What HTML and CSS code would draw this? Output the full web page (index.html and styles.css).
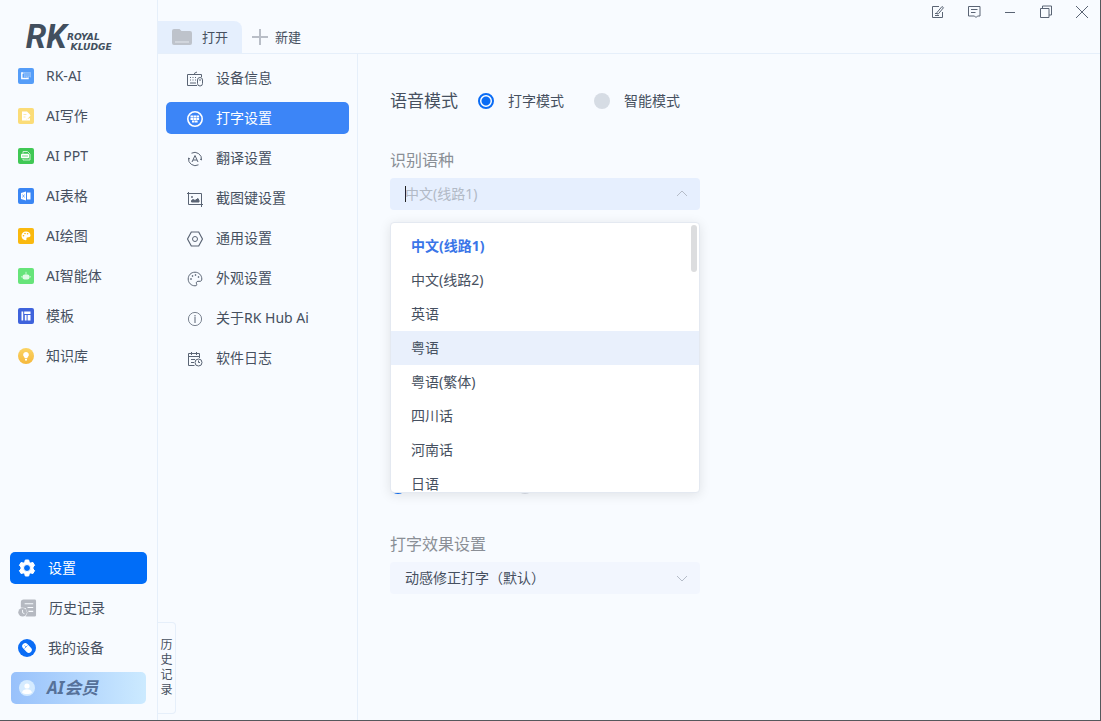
FILE: index.html
```
<!DOCTYPE html>
<html lang="zh-CN">
<head>
  <meta charset="UTF-8">
  <meta name="viewport" content="width=device-width, initial-scale=1.0">
  <title>RK Hub Ai</title>
  <link rel="stylesheet" href="styles.css">
</head>
<body>

  <aside class="sidebar">
    <svg class="logo" width="112" height="48" viewBox="0 0 112 48" role="img" aria-label="Royal Kludge">
      <text class="logoMark" x="12" y="39">RK</text>
      <text class="logoName" x="57" y="30">ROYAL</text>
      <text class="logoName" x="61" y="41">KLUDGE</text>
    </svg>

    <nav class="appNav">
      <a href="#">
        <svg width="16" height="16" viewBox="0 0 16 16"><rect width="16" height="16" rx="2" fill="#559df8"/><path d="M5.500 5H3.800v5.500H10V9.500" fill="none" stroke="#fff" stroke-width="1.400"/><path d="M6.500 4.500h6v4.500h-6z" fill="#7db5fa" stroke="#a9cdfc" stroke-dasharray="1 1"/></svg>
        RK-AI
      </a>
      <a href="#">
        <svg width="16" height="16" viewBox="0 0 16 16"><rect width="16" height="16" rx="2" fill="#fbdc78"/><path d="M4 3.500h5l3 3-4 5 4-1.500v2.500H4z" fill="#fff"/><path d="M5.500 6.500h3M5.500 9h2" stroke="#fbe9ab"/><path d="M8.500 11l3.500-4" stroke="#fff" stroke-width="1.500"/></svg>
        AI写作
      </a>
      <a href="#">
        <svg width="16" height="16" viewBox="0 0 16 16"><rect width="16" height="16" rx="2" fill="#40c855"/><path d="M5 5.500V3.500h4.500L12 6v6H5v-1" fill="none" stroke="#c9f0cf"/><rect x="3" y="5.800" width="8" height="4.400" rx="1" fill="#fff"/><path d="M5 7v2M7 7v2M9 7v2" stroke="#40c855" stroke-width=".7"/></svg>
        AI PPT
      </a>
      <a href="#">
        <svg width="16" height="16" viewBox="0 0 16 16"><rect width="16" height="16" rx="2" fill="#3b86f4"/><path d="M3 5l5-1.500v9L3 11z" fill="#fff"/><path d="M9 4.500h3.500v7H9z" fill="#fff"/><path d="M4.500 6.500l2 3m0-3l-2 3" stroke="#3b86f4" stroke-width=".6"/></svg>
        AI表格
      </a>
      <a href="#">
        <svg width="16" height="16" viewBox="0 0 16 16"><rect width="16" height="16" rx="2" fill="#fab90f"/><path d="M8 3.500c-2.700 0-4.500 1.900-4.500 4.300 0 2.500 1.800 4.400 4.100 4.400 1.500 0 .5-1.500 1-2.300.6-1 3.900.3 3.900-2.300C12.500 5 10.500 3.500 8 3.500z" fill="#fff"/><g fill="#fab90f"><circle cx="5.500" cy="7.700" r=".8"/><circle cx="7" cy="5.500" r=".8"/><circle cx="9.600" cy="5.700" r=".8"/></g></svg>
        AI绘图
      </a>
      <a href="#">
        <svg width="16" height="16" viewBox="0 0 16 16"><rect width="16" height="16" rx="2" fill="#67e47a"/><rect x="4.500" y="6.500" width="7" height="5" rx="2" fill="#e0fbe5"/><path d="M8 3.800v3M3.800 8v1.500M12.200 8v1.500" stroke="#c9f7d1"/></svg>
        AI智能体
      </a>
      <a href="#">
        <svg width="16" height="16" viewBox="0 0 16 16"><rect width="16" height="16" rx="2" fill="#3f63dc"/><path d="M3.500 3.500h1.700v9H3.500zM6.200 3.500h6.300v2.500H6.200zM6.800 7h1.800v5.500H6.800zM9.600 7h2.900v5.500H9.600z" fill="#fff"/></svg>
        模板
      </a>
      <a href="#">
        <svg width="16" height="16" viewBox="0 0 16 16"><defs><linearGradient id="bulb" x1="0" y1="0" x2="0" y2="1"><stop offset="0" stop-color="#fbd465"/><stop offset="1" stop-color="#f5b83c"/></linearGradient></defs><circle cx="8" cy="8" r="8" fill="url(#bulb)"/><path d="M8 4a2.800 2.800 0 0 0-1.800 5l.6 1.300h2.400l.6-1.300A2.800 2.800 0 0 0 8 4zM7 11h2v1.600H7z" fill="#fff"/></svg>
        知识库
      </a>
    </nav>

    <nav class="userNav">
      <a class="active" href="#">
        <svg width="18" height="18" viewBox="0 0 18 18"><path fill="#fff" stroke="#fff" stroke-linejoin="round" fill-rule="evenodd" d="M7.300 1h3.400l.5 2.200 1.500.9 2.200-.7 1.700 3L15 8v2l1.600 1.600-1.700 3-2.200-.7-1.500.9-.5 2.200H7.300l-.5-2.200-1.500-.9-2.200.7-1.700-3L3 10V8L1.400 6.400l1.700-3 2.200.7 1.500-.9zM9 5.500a3.500 3.500 0 1 0 0 7 3.500 3.500 0 0 0 0-7z"/></svg>
        设置
      </a>
      <a href="#">
        <svg width="19" height="20" viewBox="0 0 20 20"><path d="M6 1h11.500A1.500 1.500 0 0 1 19 2.500v15a1.500 1.500 0 0 1-1.500 1.500H8l2-4-2-5-5-.5V4a3 3 0 0 1 3-3z" fill="#b5b9c1"/><path d="M7 5.500h9M10 9.500h6M11 13.500h5" stroke="#f8fbff" stroke-width="1.200"/><circle cx="4.800" cy="14.500" r="4.500" fill="#b5b9c1"/><path d="M4.800 12v3l2 1" fill="none" stroke="#f8fbff"/></svg>
        历史记录
      </a>
      <a href="#">
        <svg width="18" height="18" viewBox="0 0 18 18"><circle cx="9" cy="9" r="9" fill="#0a6cf5"/><rect x="6" y="3.500" width="6" height="11" rx="3" fill="#fff" transform="rotate(-45 9 9)"/><path d="M6.500 9.500l3-3M7.800 7.800L6.500 6.500" stroke="#0a6cf5" stroke-width=".6"/></svg>
        我的设备
      </a>
      <a class="vip" href="#">
        <svg width="16" height="16" viewBox="0 0 16 16"><circle cx="8" cy="8" r="8" fill="#d5ebff"/><circle cx="8" cy="6" r="2.600" fill="#fff"/><path d="M3 12.500c.5-4.500 9.500-4.500 10 0-2 2-8 2-10 0z" fill="#fff"/></svg>
        AI会员
      </a>
    </nav>
  </aside>

  <div class="workspace">
    <header class="topbar">
      <button class="tab open" type="button">
        <svg width="20" height="16" viewBox="0 0 20 16"><path d="M2 0h5.500l2 2H18a2 2 0 0 1 2 2v10a2 2 0 0 1-2 2H2a2 2 0 0 1-2-2V2a2 2 0 0 1 2-2z" fill="#bec3cb"/><path d="M3 13h14" stroke="#e4e8ee"/></svg>
        打开
      </button>
      <button class="tab" type="button">
        <svg width="16" height="16" viewBox="0 0 16 16"><path d="M8 0v16M0 8h16" stroke="#b9bec7" stroke-width="2"/></svg>
        新建
      </button>
      <div class="windowControls">
        <button type="button" aria-label="编辑"><svg width="14" height="14" viewBox="0 0 14 14"><path d="M8 1.500H1.500v11h10V7M4 8.500h2M4 10.500h4M6 7.500l5-6 1.500 1.200-5 6L6 9z"/></svg></button>
        <button type="button" aria-label="反馈"><svg width="14" height="14" viewBox="0 0 14 14"><path d="M1.500 1.500h11.500v9.500H10.500L9 12.500 7.500 11h-6zM4 4.500h6.500M4 7.500h4.500"/></svg></button>
        <button type="button" aria-label="最小化"><svg width="14" height="14" viewBox="0 0 14 14"><path d="M2 7.500h10"/></svg></button>
        <button type="button" aria-label="还原"><svg width="14" height="14" viewBox="0 0 14 14"><path d="M1.500 3.500h8.500v9H1.500zM3.500 3.500v-2.500h9v9h-2.500"/></svg></button>
        <button type="button" aria-label="关闭"><svg width="14" height="14" viewBox="0 0 14 14"><path d="M1 1l12 12M13 1L1 13"/></svg></button>
      </div>
    </header>

    <div class="page">
      <div class="settingsSide">
        <nav class="settingsNav">
          <a href="#">
            <svg width="16" height="16" viewBox="0 0 16 16"><path d="M10 14.500H.5v-11h14V6M7.500 3.500V2.200L10 1M3 6.500h1M5.500 6.500h1M8 6.500h1M3 9h1M5.500 9h1M8 9h1M3 12h6"/><rect x="10.500" y="6.500" width="5" height="8.500" rx="2.500"/><path d="M13 8v2"/></svg>
            设备信息
          </a>
          <a class="active" href="#">
            <svg width="16" height="16" viewBox="0 0 16 16"><circle cx="8" cy="8" r="7.200" stroke-width="1.600"/><path d="M3.500 5.500h9M3.500 8h9M5 10.500h6" stroke-width="1.800" stroke-dasharray="2.600 .4"/></svg>
            打字设置
          </a>
          <a href="#">
            <svg width="16" height="16" viewBox="0 0 16 16"><path d="M4.500 2.200a6.800 6.800 0 0 1 10 6.800l-1.500-1M11.500 13.800a6.800 6.800 0 0 1-10-6.800l1.500 1M5 11L8 4.500l3 6.500M6 9h4"/></svg>
            翻译设置
          </a>
          <a href="#">
            <svg width="16" height="16" viewBox="0 0 16 16"><path d="M0 2.500h14.500V16M1.500 1v12.500H16"/><circle cx="5" cy="6" r=".6"/><path d="M4.500 11V9.500L6 8.500l2 1L11 7.500l1 2V11z" fill="#5a6474"/></svg>
            截图键设置
          </a>
          <a href="#">
            <svg width="16" height="16" viewBox="0 0 16 16"><path d="M4.300 1h7.400L15.500 8l-3.800 7H4.300L.5 8z" stroke-width="1.200"/><circle cx="8" cy="8" r="2.500"/></svg>
            通用设置
          </a>
          <a href="#">
            <svg width="16" height="16" viewBox="0 0 16 16"><path d="M8 1.200C4 1.200 1.200 4.200 1.200 8s3 6.800 6.800 6.800c2 0 2-1 1.500-2-.5-1.200 0-2.500 1.500-2.500h2c1.200 0 1.800-.8 1.800-2.300 0-3.800-3-6.800-6.800-6.800z"/><circle cx="4" cy="8" r=".5"/><circle cx="5.500" cy="5" r=".5"/><circle cx="8.500" cy="4" r=".5"/><circle cx="11.500" cy="6" r=".5"/></svg>
            外观设置
          </a>
          <a href="#">
            <svg width="16" height="16" viewBox="0 0 16 16"><circle cx="8" cy="8" r="6.600" stroke-width=".8"/><path d="M8 4v1M8 5.500v6.500"/></svg>
            关于RK Hub Ai
          </a>
          <a href="#">
            <svg width="16" height="16" viewBox="0 0 16 16"><path d="M7.500 14.500h-6v-12h11V7M4.500 1v3M9.500 1v3M1.500 5.500h11M4 8.500h4M4 11.500h3"/><circle cx="11.500" cy="11.500" r="3.500"/><path d="M11.500 9.500v2H13"/></svg>
            软件日志
          </a>
        </nav>
        <button class="historyTab" type="button">历史记录</button>
      </div>

      <main class="content">
        <div class="modeRow" role="radiogroup" aria-labelledby="modeLabel">
          <span class="modeLabel" id="modeLabel">语音模式</span>
          <label><input type="radio" name="mode" checked>打字模式</label>
          <label><input type="radio" name="mode">智能模式</label>
        </div>

        <div class="field">
          <label for="language">识别语种</label>
          <div class="combo">
            <div class="comboBox">
              <span class="caret"></span>
              <input type="text" id="language" placeholder="中文(线路1)" role="combobox" aria-expanded="true" aria-controls="languageList">
              <svg width="12" height="8" viewBox="0 0 12 8"><path d="M1 6l5-5 5 5"/></svg>
            </div>
            <div class="popup">
              <ul id="languageList" role="listbox">
                <li class="selected" role="option" aria-selected="true">中文(线路1)</li>
                <li role="option">中文(线路2)</li>
                <li role="option">英语</li>
                <li class="hover" role="option">粤语</li>
                <li role="option">粤语(繁体)</li>
                <li role="option">四川话</li>
                <li role="option">河南话</li>
                <li role="option">日语</li>
              </ul>
              <span class="scrollThumb"></span>
            </div>
          </div>
        </div>

        <div class="radioRow">
          <input type="radio" name="output" aria-labelledby="modeLabel" checked>
          <input type="radio" name="output" aria-labelledby="modeLabel">
        </div>

        <div class="field">
          <label for="effect">打字效果设置</label>
          <div class="selectBox">
            <select id="effect">
              <option>动感修正打字（默认）</option>
            </select>
            <svg width="12" height="8" viewBox="0 0 12 8"><path d="M1 2l5 5 5-5"/></svg>
          </div>
        </div>
      </main>
    </div>
  </div>

</body>
</html>
```

FILE: styles.css
```
* {
  box-sizing: border-box;
}

body {
  display: flex;
  min-height: 100vh;
  margin: 0;
  border-right: 1px solid #55585c;
  border-bottom: 1px solid #55585c;
  background-color: #f8fbff;
  color: #465060;
  font-family: "Noto Sans", "Noto Sans CJK SC", sans-serif;
  font-size: 14px;
  line-height: 20px;
}

a {
  color: inherit;
  text-decoration: none;
}

button,
input,
select {
  margin: 0;
  padding: 0;
  border: none;
  background: none;
  color: inherit;
  font: inherit;
}

svg {
  flex: none;
}

/* Left sidebar */
.sidebar {
  display: flex;
  flex: none;
  flex-direction: column;
  width: 158px;
  padding: 12px 10px 16px;
  border-right: 1px solid #e6effa;
}

.logo {
  height: 44px;
  overflow: visible;
  fill: #424f5e;
}

.logoMark {
  font: italic bold 36px Roboto, sans-serif;
}

.logoName {
  font: italic bold 10px "DejaVu Sans", sans-serif;
}

.appNav a {
  display: flex;
  align-items: center;
  gap: 12px;
  height: 40px;
  padding-left: 8px;
}

.userNav {
  display: flex;
  flex-direction: column;
  gap: 8px;
  margin-top: auto;
}

.userNav a {
  display: flex;
  align-items: center;
  gap: 12px;
  height: 32px;
  padding-left: 8px;
  border-radius: 5px;
}

.userNav .active {
  background-color: #006df8;
  color: #fff;
}

.userNav .vip {
  margin: 0 1px;
  background: linear-gradient(90deg, #98c1fb, #cceaff);
  color: #567199;
  font-size: 17px;
  font-style: italic;
  font-weight: bold;
}

/* Top bar */
.workspace {
  display: flex;
  flex: 1;
  flex-direction: column;
  min-width: 0;
}

.topbar {
  display: flex;
  align-items: flex-end;
  height: 54px;
  border-bottom: 1px solid #e6effa;
}

.tab {
  display: flex;
  align-items: center;
  gap: 7px;
  height: 32px;
  padding: 0 10px;
  font-size: 13px;
}

.tab.open {
  gap: 10px;
  padding: 0 14px;
  border-radius: 0 8px 0 0;
  background-color: #e5effd;
}

.windowControls {
  display: flex;
  align-self: flex-start;
  margin-left: auto;
}

.windowControls button {
  display: flex;
  align-items: center;
  justify-content: center;
  width: 36px;
  height: 24px;
}

.windowControls svg,
.settingsNav svg {
  fill: none;
  stroke: #5a6474;
}

/* Settings menu */
.page {
  display: flex;
  flex: 1;
}

.settingsSide {
  display: flex;
  flex: none;
  flex-direction: column;
  justify-content: space-between;
  align-items: flex-start;
  width: 200px;
  padding: 8px 0 6px;
  border-right: 1px solid #e6effa;
}

.settingsNav {
  display: flex;
  flex-direction: column;
  align-self: stretch;
  gap: 8px;
  padding: 0 8px;
}

.settingsNav a {
  display: flex;
  align-items: center;
  gap: 13px;
  height: 32px;
  padding-left: 21px;
  border-radius: 5px;
}

.settingsNav svg {
  margin-top: 2px;
}

.settingsNav .active {
  background-color: #3c85f7;
  color: #fff;
}

.settingsNav .active svg {
  stroke: #fff;
}

.historyTab {
  width: 18px;
  padding: 14px 2px 16px;
  border: 1px solid #e6effa;
  border-left: none;
  border-radius: 0 4px 4px 0;
  font-size: 12px;
  line-height: 15px;
}

/* Content */
.content {
  flex: 1;
  padding: 32px;
}

.modeRow {
  display: flex;
  align-items: center;
  gap: 30px;
  height: 30px;
}

.modeLabel {
  margin-right: -10px;
  font-size: 17px;
}

.modeRow label {
  display: flex;
  align-items: center;
  gap: 14px;
}

input[type="radio"] {
  width: 16px;
  height: 16px;
  border-radius: 50%;
  appearance: none;
  background-color: #d6dce4;
}

input[type="radio"]:checked {
  border: 2px solid #0a6cf5;
  background: radial-gradient(circle, #0a6cf5 4px, #fff 5px);
}

.field {
  max-width: 310px;
  margin-top: 32px;
}

.field > label {
  display: block;
  margin-bottom: 6px;
  color: #8a8f96;
  font-size: 16px;
  line-height: 24px;
}

.combo {
  position: relative;
}

.comboBox,
.selectBox {
  display: flex;
  align-items: center;
  height: 32px;
  padding: 0 12px 0 15px;
  border-radius: 4px;
  background-color: #f2f6fe;
}

.comboBox {
  background-color: #e6effe;
}

.comboBox input,
.selectBox select {
  flex: 1;
  min-width: 0;
  appearance: none;
  outline: none;
}

.comboBox input::placeholder {
  color: #b2bac6;
  opacity: 1;
}

.comboBox svg,
.selectBox svg {
  fill: none;
  stroke: #b5bcc8;
}

.caret {
  width: 1px;
  height: 16px;
  margin-right: -1px;
  background-color: #222;
}

.popup {
  position: absolute;
  top: 44px;
  left: 0;
  z-index: 1;
  width: 100%;
  height: 271px;
  overflow: hidden;
  border: 1px solid #e4e9f1;
  border-radius: 4px;
  background-color: #fff;
  box-shadow: 0 2px 12px rgba(0, 0, 0, 0.1);
}

.popup ul {
  margin: 0;
  padding: 6px 0;
  list-style: none;
}

.popup li {
  height: 34px;
  padding: 0 20px;
  line-height: 34px;
}

.popup .selected {
  color: #3a75e8;
  font-weight: bold;
}

.popup .hover {
  background-color: #e9f0fc;
}

.scrollThumb {
  position: absolute;
  top: 2px;
  right: 2px;
  width: 6px;
  height: 47px;
  border-radius: 3px;
  background-color: #dcdddf;
}

.radioRow {
  display: flex;
  gap: 111px;
  margin-top: 268px;
}

.radioRow + .field {
  margin-top: 38px;
}
```
